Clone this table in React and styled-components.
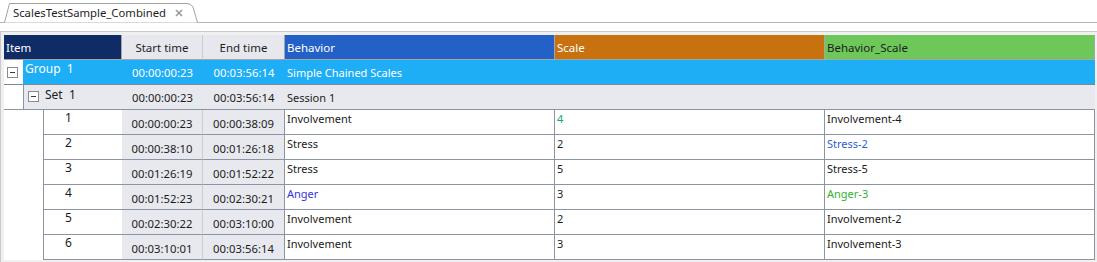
import React from "react";
import styled, { createGlobalStyle } from "styled-components";

const GlobalStyle = createGlobalStyle`
  body {
    margin: 0;
    background: #fff;
    font-family: "Noto Sans", "Open Sans", sans-serif;
    font-size: 11px;
    color: #1b1b1b;
  }
`;

const LINE = "#8a94a3";
const SOFT = "#c9ccd4";
const GRAY_BG = "#e8e9ee";

const rows = [
  { n: 1, start: "00:00:00:23", end: "00:00:38:09", behavior: "Involvement", scale: "4", combined: "Involvement-4", scaleColor: "#17a865" },
  { n: 2, start: "00:00:38:10", end: "00:01:26:18", behavior: "Stress", scale: "2", combined: "Stress-2", combinedColor: "#2c5fd2" },
  { n: 3, start: "00:01:26:19", end: "00:01:52:22", behavior: "Stress", scale: "5", combined: "Stress-5" },
  { n: 4, start: "00:01:52:23", end: "00:02:30:21", behavior: "Anger", scale: "3", combined: "Anger-3", behaviorColor: "#3434e4", combinedColor: "#2fb52f" },
  { n: 5, start: "00:02:30:22", end: "00:03:10:00", behavior: "Involvement", scale: "2", combined: "Involvement-2" },
  { n: 6, start: "00:03:10:01", end: "00:03:56:14", behavior: "Involvement", scale: "3", combined: "Involvement-3" },
];

const App = () => (
  <>
    <GlobalStyle />
    <TabStrip>
      <Tab>
        <TabOutline viewBox="0 0 194 20" width="194" height="20">
          <path d="M0.5 19.5 L5.5 0.5 L183 0.5 Q187 0.5 189 4 L193.5 19.5" fill="#fff" stroke="#a3a3a3" />
        </TabOutline>
        <TabLabel>ScalesTestSample_Combined</TabLabel>
        <CloseIcon viewBox="0 0 8 8" width="8" height="8">
          <path d="M1 1 L7 7 M7 1 L1 7" stroke="#9b9b9b" strokeWidth="1.7" />
        </CloseIcon>
      </Tab>
    </TabStrip>

    <Frame>
      <HeaderRow>
        <HeadCell $bg="#0f2c66" $color="#fff">Item</HeadCell>
        <HeadCell $bg="#e7e8ed" $center $divider={SOFT}>Start time</HeadCell>
        <HeadCell $bg="#e7e8ed" $center>End time</HeadCell>
        <HeadCell $bg="#2461c7" $color="#fff">Behavior</HeadCell>
        <HeadCell $bg="#c7720f" $color="#fff">Scale</HeadCell>
        <HeadCell $bg="#6dc859">Behavior_Scale</HeadCell>
      </HeaderRow>

      <GroupRow>
        <Gutter>
          <Expander />
        </Gutter>
        <GroupLabel>Group&nbsp; 1</GroupLabel>
        <TimeCell>00:00:00:23</TimeCell>
        <TimeCell>00:03:56:14</TimeCell>
        <TitleCell>Simple Chained Scales</TitleCell>
        <div />
      </GroupRow>

      <SetRow>
        <Gutter />
        <SetLabel>
          <Expander />
          <span>Set&nbsp; 1</span>
        </SetLabel>
        <TimeCell>00:00:00:23</TimeCell>
        <TimeCell>00:03:56:14</TimeCell>
        <TitleCell>Session 1</TitleCell>
      </SetRow>

      {rows.map((r) => (
        <DataRow key={r.n}>
          <Gutter />
          <IndexCell>{r.n}</IndexCell>
          <DataTime $divider={SOFT}>{r.start}</DataTime>
          <DataTime>{r.end}</DataTime>
          <ValueCell $color={r.behaviorColor}>{r.behavior}</ValueCell>
          <ValueCell $color={r.scaleColor}>{r.scale}</ValueCell>
          <ValueCell $color={r.combinedColor}>{r.combined}</ValueCell>
        </DataRow>
      ))}
    </Frame>
  </>
);

export default App;

const TabStrip = styled.div`
  border-bottom: 1px solid #b4b4b4;
  padding: 3px 0 0 4px;
  height: 19px;
`;

const Tab = styled.div`
  position: relative;
  width: 194px;
  height: 20px;
  display: flex;
  align-items: center;
  padding-left: 9px;
  box-sizing: border-box;
  font-size: 11.3px;
  color: #1e1e1e;
`;

const TabOutline = styled.svg`
  position: absolute;
  left: 0;
  top: 0;
`;

const TabLabel = styled.span`
  position: relative;
  line-height: 16px;
`;

const CloseIcon = styled.svg`
  position: relative;
  margin-left: 9px;
`;

const Frame = styled.div`
  margin-top: 8px;
  border: 1px solid #c9c9c9;
  border-right: none;
  padding: 3px 2px 3px 3px;
  background: #f0f0f0;
`;

const HeaderRow = styled.div`
  display: grid;
  grid-template-columns: 118px 81px 82px 270px 270px 270px;
  height: 25px;
`;

const HeadCell = styled.div`
  background: ${(p) => p.$bg};
  color: ${(p) => p.$color || "#1e1e1e"};
  display: flex;
  align-items: center;
  justify-content: ${(p) => (p.$center ? "center" : "flex-start")};
  padding-left: ${(p) => (p.$center ? "0" : "2px")};
  border-bottom: 1px solid #a6a6a6;
  border-right: 1px solid ${(p) => p.$divider || "#a6a6a6"};
  box-sizing: border-box;
  white-space: nowrap;
  font-size: 11.5px;
`;

const BaseRow = styled.div`
  display: grid;
  height: 25px;
  box-sizing: border-box;
`;

const GroupRow = styled(BaseRow)`
  grid-template-columns: 19px 99px 81px 82px 270px 540px;
  background: #1daef6;
  color: #fff;
  border-bottom: 1px solid #7e8796;
`;

const SetRow = styled(BaseRow)`
  grid-template-columns: 19px 99px 81px 82px 810px;
  background: ${GRAY_BG};
  border-bottom: 1px solid ${LINE};
`;

const DataRow = styled(BaseRow)`
  grid-template-columns: 39px 79px 81px 82px 270px 270px 270px;
  background: #fff;
`;

const Gutter = styled.div`
  background: #fff;
  display: flex;
  align-items: center;
  padding: 1px 0 0 3px;
`;

const Expander = styled.span`
  position: relative;
  width: 11px;
  height: 11px;
  box-sizing: border-box;
  border: 1px solid #8a8a8a;
  background: #fff;
  flex: none;

  &::after {
    content: "";
    position: absolute;
    left: 2px;
    top: 4px;
    width: 5px;
    height: 1px;
    background: #3a3a3a;
  }
`;

const GroupLabel = styled.div`
  padding: 1px 0 0 2px;
  line-height: 16px;
  white-space: nowrap;
  font-size: 12px;
`;

const SetLabel = styled.div`
  display: flex;
  align-items: flex-start;
  gap: 6px;
  padding: 3px 0 0 4px;
  border-left: 1px solid ${LINE};
  line-height: 13px;
  white-space: nowrap;
  font-size: 12px;

  ${Expander} {
    margin-top: 3px;
  }
`;

const TimeCell = styled.div`
  display: flex;
  align-items: center;
  justify-content: center;
  white-space: nowrap;
  font-size: 11.3px;
`;

const TitleCell = styled.div`
  display: flex;
  align-items: center;
  padding-left: 2px;
  white-space: nowrap;
`;

const IndexCell = styled.div`
  border-left: 1px solid ${LINE};
  border-bottom: 1px solid ${LINE};
  padding: 1px 0 0 21px;
  line-height: 14px;
  font-size: 12px;
`;

const DataTime = styled.div`
  background: ${GRAY_BG};
  border-bottom: 1px solid ${LINE};
  border-right: 1px solid ${(p) => p.$divider || LINE};
  display: flex;
  align-items: center;
  justify-content: center;
  padding-top: 2px;
  white-space: nowrap;
  font-size: 11.3px;
`;

const ValueCell = styled.div`
  color: ${(p) => p.$color || "#1b1b1b"};
  border-bottom: 1px solid ${LINE};
  border-right: 1px solid ${LINE};
  padding: 1px 0 0 2px;
  line-height: 16px;
  white-space: nowrap;
`;
